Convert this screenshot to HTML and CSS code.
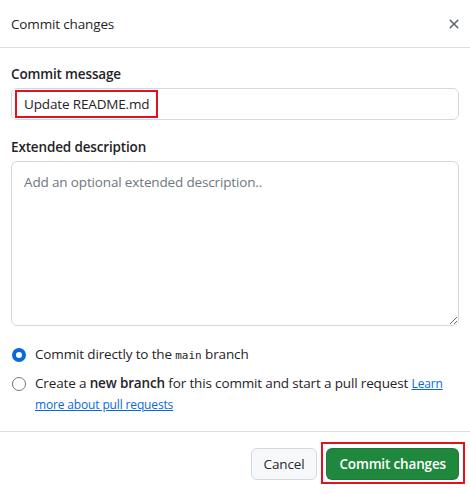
FILE: index.html
```html
<!DOCTYPE html>
<html lang="en">
<head>
<meta charset="utf-8">
<title>Commit changes</title>
<link rel="stylesheet" href="styles.css">
</head>
<body>
<div class="dialog">
  <div class="dialog-header">
    <h1 class="dialog-title">Commit changes</h1>
    <button class="close-btn" aria-label="Close">
      <svg width="16" height="16" viewBox="0 0 16 16"><path fill="currentColor" d="M3.72 3.72a.75.75 0 0 1 1.06 0L8 6.94l3.22-3.22a.749.749 0 0 1 1.275.326.749.749 0 0 1-.215.734L9.06 8l3.22 3.22a.749.749 0 0 1-.326 1.275.749.749 0 0 1-.734-.215L8 9.060l-3.22 3.22a.751.751 0 0 1-1.042-.018.751.751 0 0 1-.018-1.042L6.94 8 3.72 4.78a.75.75 0 0 1 0-1.06Z"/></svg>
    </button>
  </div>
  <div class="dialog-body">
    <label class="field-label">Commit message</label>
    <div class="text-input"><span class="highlight">Update README.md</span></div>
    <label class="field-label second">Extended description</label>
    <textarea class="textarea" placeholder="Add an optional extended description.."></textarea>
    <div class="options">
      <div class="option">
        <span class="radio checked"></span>
        <span class="option-text">Commit directly to the <code>main</code> branch</span>
      </div>
      <div class="option">
        <span class="radio"></span>
        <span class="option-text">Create a <strong>new branch</strong> for this commit and start a pull request <a href="#" class="link">Learn more about pull requests</a></span>
      </div>
    </div>
  </div>
  <div class="dialog-footer">
    <button class="btn">Cancel</button>
    <button class="btn btn-primary">Commit changes</button>
  </div>
</div>
</body>
</html>
```
FILE: styles.css
```css
* { box-sizing: border-box; }
html, body { margin: 0; padding: 0; background: #ffffff; }
body {
  font-family: "Open Sans", "Noto Sans", "Liberation Sans", sans-serif;
  font-size: 13.5px;
  letter-spacing: -0.15px;
  color: #1f2328;
}
.dialog { width: 470px; }
.dialog-header {
  height: 48px;
  display: flex;
  align-items: center;
  justify-content: space-between;
  padding: 0 11px;
  border-bottom: 1px solid #d8dee4;
}
.dialog-title {
  margin: 0;
  font-size: 13.5px;
  font-weight: 400;
  line-height: 20px;
}
.close-btn {
  border: 0;
  background: transparent;
  color: #59636e;
  padding: 0;
  margin: 0 -3px 0 0;
  width: 16px;
  height: 16px;
  display: flex;
}
.dialog-body {
  padding: 16px 11px 16px;
  display: flex;
  flex-direction: column;
}
.field-label {
  font-weight: 600;
  line-height: 20px;
  margin-bottom: 4px;
}
.field-label.second { margin-top: 17px; }
.text-input {
  height: 32px;
  border: 1px solid #d1d9e0;
  border-radius: 6px;
  padding: 1px 3px;
  display: flex;
}
.highlight {
  border: 2px solid #e0121f;
  padding: 0 7px;
  display: flex;
  align-items: center;
  line-height: 20px;
}
.textarea {
  height: 165px;
  margin: 0;
  border: 1px solid #d1d9e0;
  border-radius: 6px;
  padding: 10px 12px;
  font-family: inherit;
  font-size: 13.5px;
  letter-spacing: -0.15px;
  line-height: 20px;
  color: #1f2328;
  resize: vertical;
}
.textarea::placeholder { color: #6e7781; opacity: 1; }
.options {
  margin-top: 18px;
  display: flex;
  flex-direction: column;
  gap: 8px;
}
.option {
  display: flex;
  align-items: flex-start;
  gap: 9px;
  line-height: 21px;
}
.radio {
  flex: none;
  width: 14px;
  height: 14px;
  border-radius: 50%;
  border: 1px solid #6e7781;
  margin-top: 3.5px;
  margin-left: 1px;
  background: #fff;
}
.radio.checked { border: 4px solid #0969da; }
.option-text { color: #1f2328; line-height: 21px; }
code {
  font-family: "DejaVu Sans Mono", "Liberation Mono", monospace;
  font-size: 11px;
  line-height: 1;
  letter-spacing: 0;
}
strong { font-weight: 600; }
.link {
  color: #0969da;
  font-size: 12px;
  line-height: 1;
  text-decoration: underline;
}
.dialog-footer {
  border-top: 1px solid #d8dee4;
  padding: 16px 11px 15px;
  display: flex;
  justify-content: flex-end;
  gap: 9px;
}
.btn {
  height: 32px;
  margin: 0;
  padding: 0 12px;
  border: 1px solid #d1d9e0;
  border-radius: 6px;
  background: #f6f8fa;
  color: #25292e;
  font-family: inherit;
  font-size: 13.5px;
  letter-spacing: -0.15px;
  font-weight: 500;
}
.btn-primary {
  position: relative;
  background: #1f883d;
  border-color: rgba(31, 35, 40, 0.15);
  color: #ffffff;
  font-weight: 600;
}
.btn-primary::after {
  content: "";
  position: absolute;
  left: -6px;
  right: -7px;
  top: -7px;
  bottom: -5px;
  border: 2px solid #e0121f;
}
```
